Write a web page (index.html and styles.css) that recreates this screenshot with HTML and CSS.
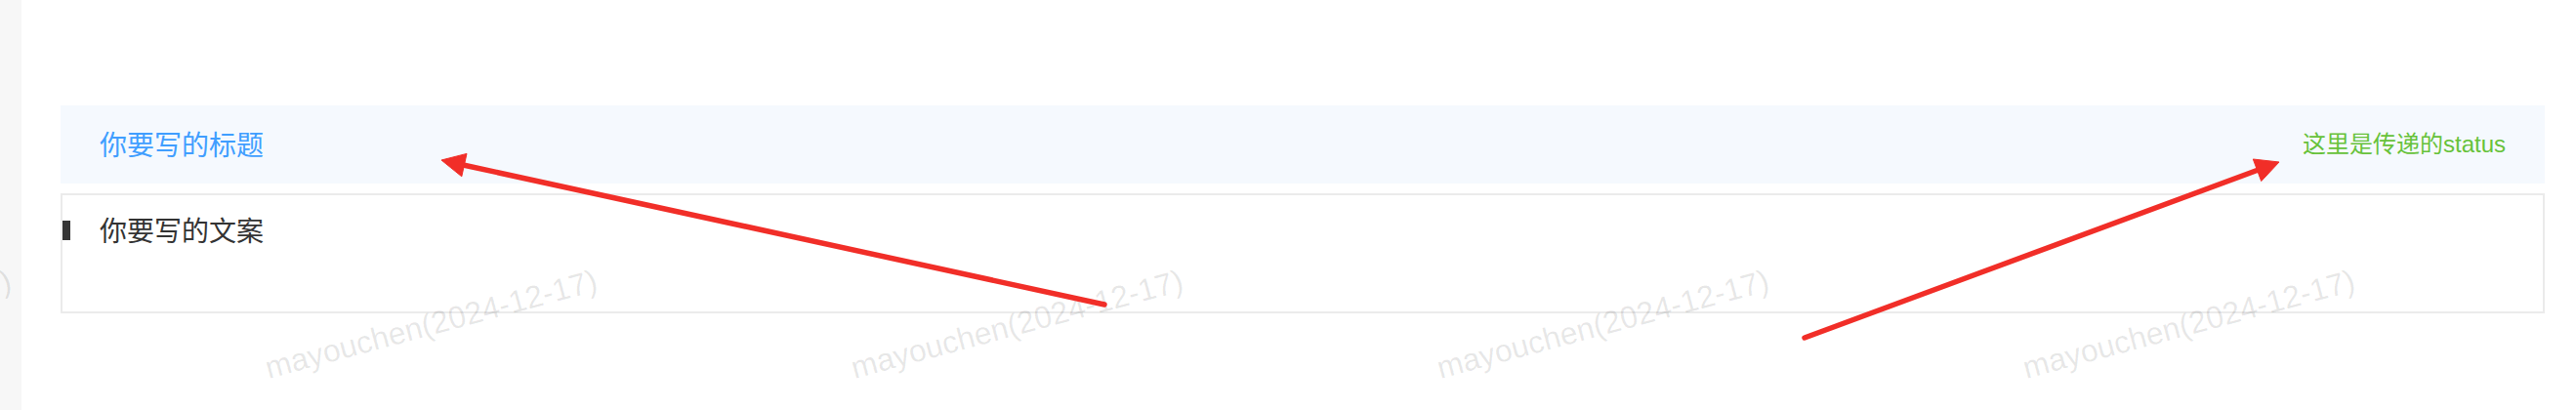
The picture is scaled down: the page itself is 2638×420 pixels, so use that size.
FILE: index.html
```html
<!DOCTYPE html>
<html lang="zh-CN">
<head>
<meta charset="utf-8">
<title>Card</title>
<link rel="stylesheet" href="styles.css">
</head>
<body>
<div class="page">
  <aside class="sidebar"></aside>
  <main class="main">
    <div class="card-header">
      <span class="card-title">你要写的标题</span>
      <span class="card-status">这里是传递的status</span>
    </div>
    <div class="card-body">
      <div class="card-row">
        <i class="card-marker"></i>
        <span class="card-text">你要写的文案</span>
      </div>
    </div>
  </main>

  <div class="watermarks" aria-hidden="true">
    <span class="wm">mayouchen(2024-12-17)</span>
    <span class="wm">mayouchen(2024-12-17)</span>
    <span class="wm">mayouchen(2024-12-17)</span>
    <span class="wm">mayouchen(2024-12-17)</span>
    <span class="wm">mayouchen(2024-12-17)</span>
  </div>

  <svg class="annotations" width="2638" height="420" viewBox="0 0 2638 420" aria-hidden="true">
    <g fill="#f12e28" stroke="#f12e28">
      <line x1="1131" y1="312" x2="472" y2="168.5" stroke-width="5.5" stroke-linecap="round"/>
      <polygon points="452,164 478,157.4 472.8,180.8" stroke-width="1" stroke-linejoin="round"/>
      <line x1="1848" y1="346" x2="2314" y2="173.5" stroke-width="5.5" stroke-linecap="round"/>
      <polygon points="2334,166 2307.3,163 2315.7,185.6" stroke-width="1" stroke-linejoin="round"/>
    </g>
  </svg>
</div>
</body>
</html>
```

FILE: styles.css
```css
* {
  box-sizing: border-box;
}

html, body {
  margin: 0;
  padding: 0;
  background: #ffffff;
}

body {
  font-family: "Liberation Sans", "Noto Sans CJK SC", sans-serif;
  color: #333333;
}

.page {
  position: relative;
  display: flex;
  width: 2638px;
  height: 420px;
  overflow: hidden;
}

.sidebar {
  flex: 0 0 22px;
  background: #f7f7f7;
}

.main {
  flex: 1;
  padding: 108px 32px 0 40px;
}

.card-header {
  height: 80px;
  padding: 0 40px;
  display: flex;
  align-items: center;
  justify-content: space-between;
  background: #f5f9fe;
}

.card-title {
  padding-top: 3px;
  font-size: 28px;
  line-height: 40px;
  color: #409eff;
}

.card-status {
  font-size: 24px;
  line-height: 34px;
  color: #67c23a;
}

.card-body {
  margin-top: 10px;
  height: 123px;
  border: 2px solid #ebebeb;
  padding-top: 16px;
}

.card-row {
  display: flex;
  align-items: center;
  height: 40px;
}

.card-marker {
  display: block;
  width: 8px;
  height: 20px;
  background: #333333;
}

.card-text {
  margin-left: 30px;
  padding-top: 3px;
  font-size: 28px;
  line-height: 40px;
  color: #333333;
}

.watermarks {
  position: absolute;
  left: -325px;
  top: 361px;
  display: flex;
  pointer-events: none;
}

.wm {
  flex: 0 0 600px;
  font-family: "Liberation Sans", sans-serif;
  font-size: 32px;
  line-height: 32px;
  white-space: nowrap;
  color: rgba(0, 0, 0, 0.1);
  transform-origin: 0 27px;
  transform: rotate(-15deg);
}

.annotations {
  position: absolute;
  left: 0;
  top: 0;
  pointer-events: none;
}
```
